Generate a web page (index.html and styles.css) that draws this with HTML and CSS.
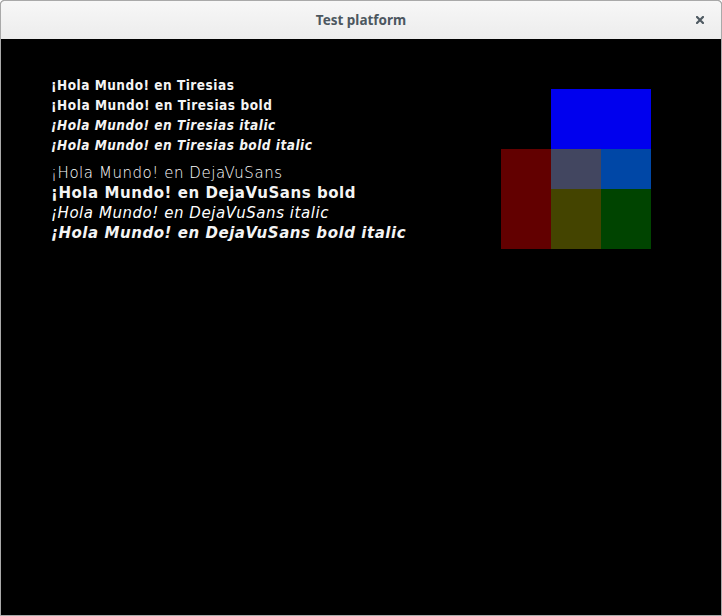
FILE: index.html
```html
<!DOCTYPE html>
<html>
<head>
<meta charset="utf-8">
<link rel="stylesheet" href="styles.css">
</head>
<body>
<div class="window">
  <div class="titlebar">
    <span class="title">Test platform</span>
    <span class="close">
      <svg width="8" height="8" viewBox="0 0 8 8"><path d="M1 1 L7 7 M7 1 L1 7" stroke="#4f5a62" stroke-width="2.2" stroke-linecap="square"/></svg>
    </span>
  </div>
  <div class="content">
    <div class="texts">
      <div class="group tiresias">
        <div class="line">¡Hola Mundo! en Tiresias</div>
        <div class="line b">¡Hola Mundo! en Tiresias bold</div>
        <div class="line i">¡Hola Mundo! en Tiresias italic</div>
        <div class="line bi">¡Hola Mundo! en Tiresias bold italic</div>
      </div>
      <div class="group dejavu">
        <div class="line r">¡Hola Mundo! en DejaVuSans</div>
        <div class="line b">¡Hola Mundo! en DejaVuSans bold</div>
        <div class="line i">¡Hola Mundo! en DejaVuSans italic</div>
        <div class="line bi">¡Hola Mundo! en DejaVuSans bold italic</div>
      </div>
    </div>
    <div class="boxes">
      <div class="bx blue"></div>
      <div class="bx red"></div>
      <div class="bx gray"></div>
      <div class="bx blue2"></div>
      <div class="bx olive"></div>
      <div class="bx green"></div>
    </div>
  </div>
</div>
</body>
</html>
```
FILE: styles.css
```css
html, body {
  margin: 0;
  padding: 0;
  background: #ffffff;
}
.window {
  width: 722px;
  height: 616px;
  box-sizing: border-box;
  border: 1px solid #a9a9a9;
  border-radius: 4px 4px 0 0;
  display: flex;
  flex-direction: column;
  overflow: hidden;
  background: #000;
}
.titlebar {
  height: 38px;
  flex: none;
  background: linear-gradient(#f7f7f7, #ececec);
  position: relative;
  display: flex;
  align-items: center;
  justify-content: center;
}
.title {
  font-family: "Noto Sans", sans-serif;
  font-weight: 700;
  font-size: 13.5px;
  color: #4c575f;
}
.close {
  position: absolute;
  right: 17px;
  top: 15px;
  width: 8px;
  height: 8px;
  display: flex;
}
.content {
  flex: 1;
  background: #000;
  display: flex;
  padding: 36px 0 0 50px;
}
.texts {
  width: 450px;
  color: #f4f4f4;
}
.group {
  display: flex;
  flex-direction: column;
}
.line {
  height: 20px;
  line-height: 20px;
  white-space: nowrap;
}
.tiresias {
  font-family: "DejaVu Sans Condensed", "DejaVu Sans", sans-serif;
  font-size: 13.5px;
  font-weight: 700;
  letter-spacing: 0.5px;
}
.tiresias .b {
  letter-spacing: 0.55px;
}
.tiresias .i, .tiresias .bi {
  font-style: italic;
  letter-spacing: 0.5px;
}
.dejavu {
  margin-top: 8px;
  font-family: "DejaVu Sans", sans-serif;
  font-size: 15px;
  letter-spacing: 0.55px;
}
.dejavu .r { font-weight: 200; color: #ffffff; }
.dejavu .b { font-weight: 700; }
.dejavu .i { font-weight: 200; font-style: italic; color: #ffffff; }
.dejavu .bi { font-weight: 700; font-style: italic; }
.boxes {
  margin-top: 14px;
  display: grid;
  grid-template-columns: 50px 50px 50px;
  grid-template-rows: 60px 40px 60px;
  align-self: flex-start;
}
.blue { grid-column: 2 / 4; grid-row: 1; background: #0000ee; }
.red { grid-column: 1; grid-row: 2 / 4; background: #620000; }
.gray { grid-column: 2; grid-row: 2; background: #424660; }
.blue2 { grid-column: 3; grid-row: 2; background: #0047a6; }
.olive { grid-column: 2; grid-row: 3; background: #444400; }
.green { grid-column: 3; grid-row: 3; background: #004400; }
```
